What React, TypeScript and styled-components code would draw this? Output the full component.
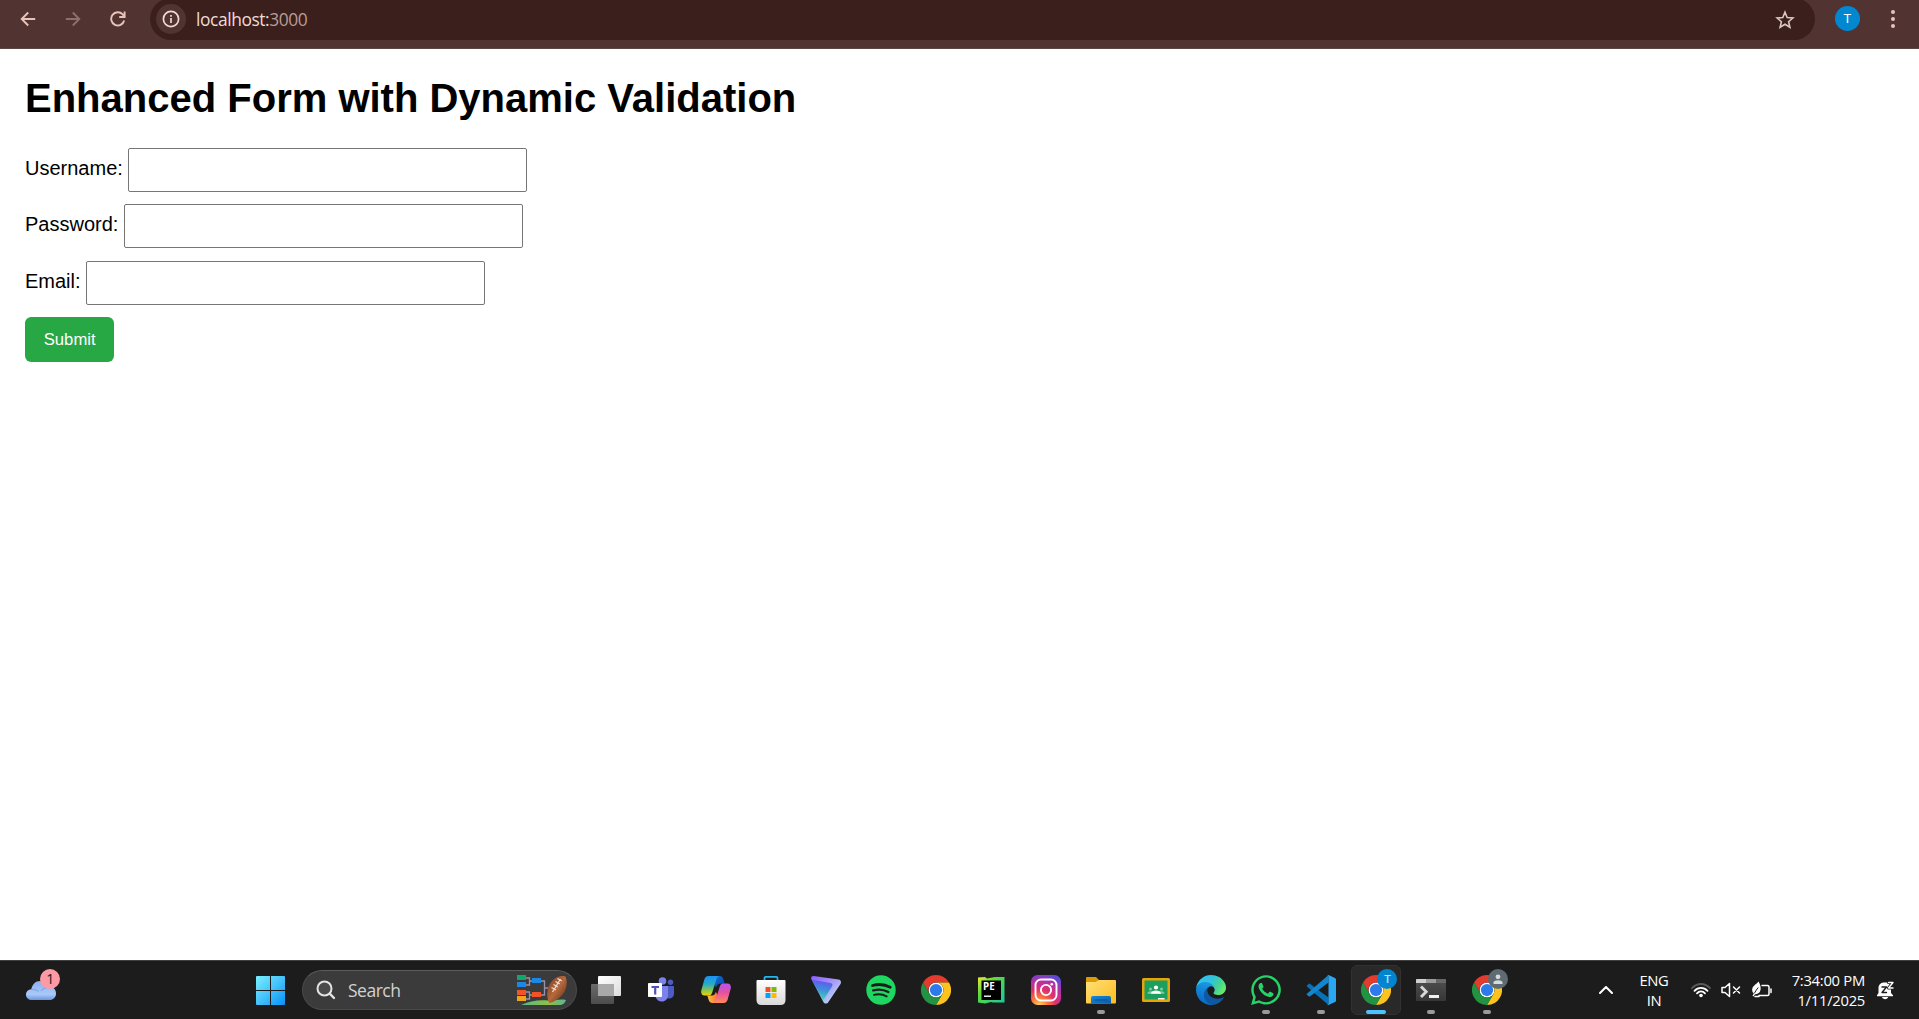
import React from "react";
import styled, { createGlobalStyle } from "styled-components";
import { FaWhatsapp } from "react-icons/fa";

const GlobalStyle = createGlobalStyle`
  html, body { margin: 0; padding: 0; background: #fff; overflow: hidden; }
  * { box-sizing: border-box; }
`;

const uiFont = `"Segoe UI", "Open Sans", "Noto Sans", sans-serif`;
const pageFont = `Arial, "Liberation Sans", sans-serif`;

const Screen = styled.div`
  display: flex;
  flex-direction: column;
  width: 1919px;
  height: 1019px;
  overflow: hidden;
`;

/* ---------- browser toolbar ---------- */

const Toolbar = styled.header`
  display: flex;
  flex: none;
  height: 49px;
  padding-left: 20px;
  background: #513431;
  border-bottom: 1px solid #5b4542;
  overflow: hidden;
  font-family: ${uiFont};
`;

const NavButtons = styled.nav`
  display: flex;
  width: 130px;
  height: 38px;
  align-items: center;
  gap: 29px;
`;

const NavIcon = styled.svg<{ $dim?: boolean }>`
  display: block;
  flex: none;
  width: 16px;
  height: 16px;
  fill: none;
  stroke: ${(p) => (p.$dim ? "#8f6f6b" : "#e9c2bb")};
  stroke-width: 1.9;
`;

const AddressBar = styled.div`
  display: flex;
  flex: none;
  align-items: center;
  width: 1665px;
  height: 42px;
  margin-top: -2px;
  padding: 0 20px 0 6px;
  border-radius: 21px;
  background: #3a1f1c;
`;

const SiteInfo = styled.span`
  display: flex;
  align-items: center;
  justify-content: center;
  width: 30px;
  height: 30px;
  border-radius: 50%;
  background: #513431;
`;

const Url = styled.span`
  flex: 1;
  margin-left: 10px;
  color: #b99c97;
  font-size: 17.4px;
  line-height: 24px;
  letter-spacing: -0.42px;
`;

const Host = styled.span`
  color: #f0dad5;
`;

const Profile = styled.span`
  display: flex;
  align-items: center;
  justify-content: center;
  width: 25px;
  height: 25px;
  margin: 6px 0 0 20px;
  border-radius: 50%;
  background: #0288d1;
  color: #fff;
  font: 13px Roboto, sans-serif;
`;

const MenuDots = styled.svg`
  width: 6px;
  height: 20px;
  margin: 9px 0 0 29.5px;
  fill: #e9c2bb;
`;

/* ---------- form page ---------- */

const Page = styled.main`
  display: flex;
  flex: 1;
  flex-direction: column;
  padding: 0 25px;
  background: #fff;
  color: #000;
  font-family: ${pageFont};
  font-size: 20px;
`;

const Title = styled.h1`
  margin: 26px 0 27px;
  font-size: 40px;
  line-height: 46px;
  font-weight: 700;
`;

const Form = styled.form`
  display: flex;
  flex-direction: column;
  align-items: flex-start;
  gap: 12.4px;
`;

const Field = styled.label`
  display: flex;
  gap: 5.6px;
  height: 44px;
  line-height: 23px;
`;

const FieldName = styled.span`
  padding-top: 9px;
`;

const TextInput = styled.input`
  appearance: none;
  width: 399px;
  height: 44px;
  margin: 0;
  padding: 10px;
  border: 1px solid #767676;
  border-radius: 2px;
  background: #fff;
  font: 16.67px ${pageFont};
  outline: none;
`;

const SubmitButton = styled.button`
  height: 45px;
  padding: 0 18.75px;
  border: 0;
  border-radius: 6.25px;
  background: #28a745;
  color: #fff;
  font: 16.67px ${pageFont};
`;

/* ---------- taskbar ---------- */

const Taskbar = styled.footer`
  display: flex;
  flex: none;
  align-items: center;
  height: 59px;
  border-top: 1px solid #404040;
  background: #1c1c1c;
  font-family: ${uiFont};
`;

const Widgets = styled.div`
  display: flex;
  width: 256px;
  height: 58px;
  padding: 5px 0 0 24px;
`;

const StartIcon = styled.svg`
  display: block;
  flex: none;
  width: 29px;
  height: 29px;
  margin-right: 17px;
`;

const SearchBox = styled.div`
  display: flex;
  flex: none;
  align-items: center;
  width: 275px;
  height: 40px;
  padding: 0 8px 0 13px;
  border: 1px solid #4a4a4a;
  border-top-color: #5c5c5c;
  border-radius: 20px;
  background: #3b3b3b;
  color: #d2d2d2;
  font-size: 17.5px;
`;

const SearchText = styled.span`
  flex: 1;
  margin: -1px 0 0 12px;
  letter-spacing: -0.5px;
`;

const Apps = styled.div`
  display: flex;
  flex: none;
  margin-left: 1px;
`;

const AppSlot = styled.div<{ $active?: boolean }>`
  position: relative;
  display: flex;
  align-items: center;
  justify-content: center;
  width: 50px;
  height: 50px;
  margin: 0 2.54px;
  border-radius: 6px;
  border: 1px solid ${(p) => (p.$active ? "#323232" : "transparent")};
  background: ${(p) => (p.$active ? "#292929" : "transparent")};
`;

const Indicator = styled.i<{ $active?: boolean }>`
  position: absolute;
  bottom: 0;
  width: ${(p) => (p.$active ? 20 : 8)}px;
  height: 4px;
  border-radius: 2px;
  background: ${(p) => (p.$active ? "#4cc2ff" : "#9a9a9a")};
`;

const AccountBadge = styled.span<{ $grey?: boolean }>`
  position: absolute;
  top: 3px;
  right: 3px;
  display: flex;
  align-items: center;
  justify-content: center;
  width: 20px;
  height: 20px;
  border-radius: 50%;
  background: ${(p) => (p.$grey ? "#5f6b73" : "#0285d0")};
  color: #b9def3;
  font: 500 11.5px Roboto, sans-serif;
`;

const Tray = styled.div`
  display: flex;
  flex: none;
  align-items: center;
  margin-left: auto;
  padding-right: 23px;
  color: #fff;
  font-size: 14.8px;
  line-height: 20px;
`;

const TrayIcon = styled.svg<{ $weight?: number }>`
  display: block;
  flex: none;
  fill: none;
  stroke: #fff;
  stroke-width: ${(p) => p.$weight ?? 1.5};
  stroke-linecap: round;
  stroke-linejoin: round;
`;

const Language = styled.div`
  width: 50px;
  margin: 0 12px 0 16px;
  text-align: center;
  letter-spacing: -0.4px;
`;

const Status = styled.div`
  display: flex;
  align-items: center;
  gap: 10px;
`;

const Clock = styled.div`
  width: 86px;
  margin: -1px 11px 0 7px;
  text-align: right;
  white-space: nowrap;
  letter-spacing: -0.28px;
`;

/* ---------- icons ---------- */

const Glyph = styled.svg`
  display: block;
  flex: none;
  width: 30px;
  height: 30px;
`;

const WhatsAppGlyph = styled(FaWhatsapp)`
  width: 34px;
  height: 34px;
  color: #25d366;
`;

const Chrome = () => (
  <Glyph viewBox="0 0 48 48">
    <circle cx="24" cy="24" r="12" fill="#fff" />
    <path fill="#e33b2e" d="M24,12H44.7812a23.9939,23.9939,0,0,0-41.5639.0029L13.6079,30l.0093-.0024A11.9852,11.9852,0,0,1,24,12Z" />
    <path fill="#fcc31e" d="M34.3913,30.0029,24.0007,48A23.994,23.994,0,0,0,44.78,12.0031H23.9989l-.0025.0093A11.985,11.985,0,0,1,34.3913,30.0029Z" />
    <path fill="#229342" d="M13.6086,30.0031,3.218,12.006A23.994,23.994,0,0,0,24.0025,48L34.3931,30.0029l-.0067-.0068a11.9852,11.9852,0,0,1-20.7778.007Z" />
    <circle cx="24" cy="24" r="9.8" fill="#2b7bea" />
  </Glyph>
);

const Weather = () => (
  <svg width="38" height="40" viewBox="0 0 38 40">
    <defs>
      <linearGradient id="cloud" x1="0" y1="0" x2="0" y2="1">
        <stop offset="0" stopColor="#8cb1f3" />
        <stop offset=".7" stopColor="#a9c9f8" />
        <stop offset="1" stopColor="#6c95e2" />
      </linearGradient>
    </defs>
    <path fill="url(#cloud)" d="M8 34C4.5 34 2 31.8 2 28.7s2.3-5.200 5.300-5.400C8.300 18.500 11.600 15 16 15c4.200 0 7.300 2.500 8.500 6.200C29 20.500 32 23.400 32 27.500S29.200 34 25.500 34Z" />
    <path fill="none" stroke="#789fe6" strokeWidth="1.2" opacity=".7" d="M7.500 23.500c3-.6 5.200.1 7 2M17 25c1.500-2.300 4-3.600 7.400-3.700" />
    <circle cx="26" cy="13" r="10" fill="#ff99a4" />
    <text x="26.3" y="18" textAnchor="middle" fontSize="14" fontFamily="Open Sans, sans-serif" fill="#20191a">1</text>
  </svg>
);

const WindowsLogo = () => (
  <StartIcon viewBox="0 0 29 29">
    <defs>
      <linearGradient id="win" x1="0" y1="0" x2="29" y2="29" gradientUnits="userSpaceOnUse">
        <stop offset="0" stopColor="#78f0ff" />
        <stop offset=".5" stopColor="#45c3fa" />
        <stop offset="1" stopColor="#0790fb" />
      </linearGradient>
    </defs>
    <path fill="url(#win)" d="M1 0H14V14H0V1Q0 0 1 0ZM15 0H28Q29 0 29 1V14H15ZM0 15H14V29H1Q0 29 0 28ZM15 15H29V28Q29 29 28 29H15Z" />
  </StartIcon>
);

const Magnifier = () => (
  <svg width="20" height="20" viewBox="0 0 20 20" fill="#4b4b4b" stroke="#e4e4e4" strokeWidth="2" strokeLinecap="round">
    <circle cx="8.5" cy="8.5" r="7" />
    <path d="M13.7 13.7L18 18" strokeWidth="2.4" />
  </svg>
);

const SearchHighlight = () => (
  <svg width="51" height="32" viewBox="0 0 51 32">
    <defs>
      <linearGradient id="ball" x1="0" y1="0" x2="1" y2="1">
        <stop offset="0" stopColor="#7a3d22" />
        <stop offset=".5" stopColor="#b5683c" />
        <stop offset="1" stopColor="#5b2915" />
      </linearGradient>
      <linearGradient id="grass">
        <stop offset="0" stopColor="#55b88e" />
        <stop offset=".6" stopColor="#8fc045" />
        <stop offset="1" stopColor="#57b894" />
      </linearGradient>
    </defs>
    <path fill="none" stroke="#9a90a8" strokeWidth="1.3" d="M9 4h3.5v7H9M12.5 7h3M9 18h3.5v7H9M12.5 21h3M24 7h3.5v14H24M27.5 14h4" />
    <path fill="#12a56c" d="M0 1h9v5H0z" />
    <path fill="#1c87e5" d="M0 8h9v5H0zM15 4h9v5h-9z" />
    <path fill="#f4532a" d="M0 16h9v5H0zM15 18h9v5h-9z" />
    <path fill="#f3a31b" d="M0 22h9v5H0z" />
    <path fill="url(#grass)" d="M4 31c8-4 18-5.5 27-4.5 6 .2 12-2 18-.5-1 3-3 5-7 5Z" />
    <path fill="url(#ball)" d="M32.5 29C28 22 30 9 38.5 4 42 2 46 1.5 48.5 2.5c2.5 6 1 14-3.5 18.8C41.5 25.5 36.5 28 32.5 29Z" />
    <path fill="none" stroke="#ead9d0" strokeWidth="1.4" d="M35.5 18L43.5 5M34.5 13.5l4.5 2.5M36.5 10.5l4.3 2.5M38.5 7.5l4.3 2.5M40.5 4.5l4.3 2.5" />
  </svg>
);

const TaskView = () => (
  <Glyph viewBox="0 0 30 30">
    <defs>
      <linearGradient id="tvBack" x1="0" y1="0" x2="0" y2="1">
        <stop offset="0" stopColor="#6c6c6c" />
        <stop offset="1" stopColor="#4c4c4c" />
      </linearGradient>
      <linearGradient id="tvFront" x1="0" y1="0" x2="1" y2="1">
        <stop offset="0" stopColor="#fff" />
        <stop offset="1" stopColor="#dcdcdc" />
      </linearGradient>
    </defs>
    <rect x="7" y="1" width="23" height="20" rx="1" fill="url(#tvFront)" />
    <rect x="0" y="9" width="23" height="20" rx="1" fill="url(#tvBack)" />
    <path fill="#a9a9a9" d="M7 9H23V21H7Z" />
  </Glyph>
);

const Teams = () => (
  <Glyph viewBox="2 0 30 30">
    <circle cx="26.5" cy="7.2" r="2.7" fill="#4f5bc5" />
    <path fill="#4f5bc5" d="M20 11h9.5q.5 0 .5.5V18.5c0 3-2.3 5-5 5s-5-2-5-5Z" />
    <circle cx="18.5" cy="6" r="3.8" fill="#7b83eb" />
    <path fill="#7b83eb" d="M11 11h13v9c0 4-2.8 6.5-6 6.5s-5.8-2-6.6-5Z" />
    <rect x="4" y="8" width="14" height="14" rx=".8" fill="#fff" />
    <path fill="#4b53bc" d="M7.5 11h7.500v1.900h-2.700V19.500h-2.200v-6.600H7.500Z" />
  </Glyph>
);

const Copilot = () => (
  <Glyph viewBox="0 0 30 30">
    <defs>
      <linearGradient id="cpL" x1="0" y1="0" x2="0" y2="1">
        <stop offset="0" stopColor="#1d92ee" />
        <stop offset=".4" stopColor="#23aacb" />
        <stop offset=".7" stopColor="#7cc457" />
        <stop offset="1" stopColor="#f3d300" />
      </linearGradient>
      <linearGradient id="cpR" x1="0" y1="0" x2="0" y2="1">
        <stop offset="0" stopColor="#b557ed" />
        <stop offset=".45" stopColor="#e34fa6" />
        <stop offset="1" stopColor="#ff8a55" />
      </linearGradient>
      <linearGradient id="cpT" x1="0" y1="0" x2="1" y2="1">
        <stop offset="0" stopColor="#1372df" />
        <stop offset="1" stopColor="#0947a5" />
      </linearGradient>
      <linearGradient id="cpB">
        <stop offset="0" stopColor="#ffc33c" />
        <stop offset="1" stopColor="#f3553e" />
      </linearGradient>
    </defs>
    <path fill="url(#cpT)" d="M10 1H18.500c2 0 3.200 1.200 3.800 3l1.400 4.700H19c-2.200 0-3.200 1.500-3.900 3.700Z" />
    <path fill="url(#cpB)" d="M20 28H11.500c-2 0-3.200-1.200-3.800-3l-1.400-4.600H11c2.200 0 3.200-1.500 3.900-3.700Z" />
    <path fill="url(#cpL)" d="M7.500 1H19c-2 0-3 1.600-3.600 3.600L11.200 17.500c-.6 2-1.600 3.100-3.800 3.100H3.500C.7 20.600-.4 18 .4 15L3.200 5C3.900 2.500 5.200 1 7.500 1Z" />
    <path fill="url(#cpR)" d="M22.500 28H11c2 0 3-1.600 3.600-3.600L18.800 11.500c.6-2 1.600-3.100 3.800-3.100h3.900c2.800 0 3.900 2.600 3.100 5.600L26.800 24c-.7 2.500-2 4-4.300 4Z" />
  </Glyph>
);

const Store = () => (
  <Glyph viewBox="0 0 30 30">
    <defs>
      <linearGradient id="bag" x1="0" y1="0" x2="0" y2="1">
        <stop offset="0" stopColor="#fff" />
        <stop offset="1" stopColor="#d9d9d9" />
      </linearGradient>
    </defs>
    <path fill="none" stroke="#28b4ec" strokeWidth="1.8" d="M8.500 7V3q0-1.100 1.100-1.100H20.400q1.100 0 1.100 1.100V7" />
    <path fill="url(#bag)" d="M.5 6q0-1 1-1h27q1 0 1 1V25q0 5-5 5H5.500q-5 0-5-5Z" />
    <path fill="#f25022" d="M9.500 12h5v5h-5z" />
    <path fill="#7fba00" d="M15.500 12h5v5h-5z" />
    <path fill="#00a4ef" d="M9.500 18h5v5h-5z" />
    <path fill="#ffb900" d="M15.500 18h5v5h-5z" />
  </Glyph>
);

const ProtonVpn = () => (
  <Glyph viewBox="0 0 30 30">
    <defs>
      <linearGradient id="pvA" x1="0" y1="0" x2="1" y2="1">
        <stop offset="0" stopColor="#8a5cff" />
        <stop offset=".45" stopColor="#a795fb" />
        <stop offset="1" stopColor="#bff5ea" />
      </linearGradient>
      <linearGradient id="pvB" x1=".6" y1="0" x2=".4" y2="1">
        <stop offset="0" stopColor="#6650f5" />
        <stop offset=".5" stopColor="#3d93d6" />
        <stop offset="1" stopColor="#3fe0b5" />
      </linearGradient>
    </defs>
    <path fill="url(#pvA)" d="M2.800 1L27.500 4.600c2.200.4 3.200 2.400 2 4.300L17.400 27c-1.300 2-3.900 2-5 0L.3 4C-.5 2.300.9.800 2.800 1Z" />
    <path fill="url(#pvB)" d="M.8 4.800L19.500 8c1.900.3 2.600 1.800 1.500 3.400L12 25.500Z" />
  </Glyph>
);

const Spotify = () => (
  <Glyph viewBox="0 0 30 30">
    <circle cx="15" cy="15" r="14.7" fill="#1ed760" />
    <g fill="none" stroke="#1c1c1c" strokeLinecap="round">
      <path strokeWidth="2.8" d="M6.500 10.500c6-1.700 12.500-1.100 17.800 1.700" />
      <path strokeWidth="2.3" d="M7.200 15.400c5.200-1.500 10.700-.9 15.200 1.600" />
      <path strokeWidth="1.9" d="M7.900 19.900c4.500-1.200 8.900-.7 12.800 1.500" />
    </g>
  </Glyph>
);

const PyCharmEdu = () => (
  <Glyph viewBox="0 0 30 30">
    <defs>
      <linearGradient id="pe" x1="0" y1="0" x2="1" y2="1">
        <stop offset="0" stopColor="#f0ea3c" />
        <stop offset=".35" stopColor="#5fd83f" />
        <stop offset="1" stopColor="#14c9a0" />
      </linearGradient>
    </defs>
    <path fill="url(#pe)" d="M2 2.500L9 2l2 1.500L19 2h9.500v25.500H17L15 27 9 28.500 2 27.500Z" />
    <path fill="#000" d="M5.500 5.500h19.500v19.500H5.500z" />
    <text x="7" y="15.3" fontSize="9.8" fontWeight="700" fontFamily="Open Sans, sans-serif" fill="#fff">PE</text>
    <path fill="#fff" d="M8 20.500h7v1.400H8z" />
  </Glyph>
);

const Instagram = () => (
  <Glyph viewBox="0 0 30 30">
    <defs>
      <radialGradient id="ig" cx=".28" cy="1.02" r="1.08">
        <stop offset="0" stopColor="#ffd45c" />
        <stop offset=".25" stopColor="#fd7a35" />
        <stop offset=".5" stopColor="#e0306d" />
        <stop offset=".78" stopColor="#b52fa8" />
        <stop offset="1" stopColor="#5a4bd8" />
      </radialGradient>
    </defs>
    <rect width="30" height="30" rx="6.5" fill="url(#ig)" />
    <g fill="none" stroke="#fff" strokeWidth="1.9">
      <rect x="4.5" y="4.5" width="21" height="21" rx="5.5" />
      <circle cx="15" cy="15" r="5.1" />
    </g>
    <circle cx="20.8" cy="9.2" r="1.3" fill="#fff" />
  </Glyph>
);

const Explorer = () => (
  <Glyph viewBox="0 0 30 30">
    <defs>
      <linearGradient id="fold" x1="0" y1="0" x2="1" y2="1">
        <stop offset="0" stopColor="#ffe07a" />
        <stop offset="1" stopColor="#fdbb1c" />
      </linearGradient>
      <linearGradient id="tray" x1="0" y1="0" x2="1" y2="1">
        <stop offset="0" stopColor="#1688dc" />
        <stop offset="1" stopColor="#065da8" />
      </linearGradient>
    </defs>
    <path fill="#dd9a07" d="M0 3q0-1 1-1h9l3.500 3.500V9H0Z" />
    <path fill="url(#fold)" d="M0 7h9.500L13 5H29q1 0 1 1V27.500q0 1-1 1H1q-1 0-1-1Z" />
    <path fill="url(#tray)" d="M5 28.500V23q0-2 2-2H23q2 0 2 2v5.500Z" />
    <path fill="#0a4c86" d="M8.500 24.500h13v1h-13z" />
  </Glyph>
);

const Classroom = () => (
  <Glyph viewBox="0 0 30 30">
    <rect x="1" y="3" width="28" height="24" rx="1.5" fill="#e3a60b" />
    <path fill="#1c9f5d" d="M3.500 5.500h23v19h-23z" />
    <g fill="#7fcaa4">
      <circle cx="9.5" cy="14" r="1.5" />
      <circle cx="20.5" cy="14" r="1.5" />
      <path d="M6.500 18.800c0-1.800 1.500-2.500 3-2.500h11c1.500 0 3 .7 3 2.500Z" />
    </g>
    <circle cx="15" cy="12.5" r="2.1" fill="#fff" />
    <path fill="#fff" d="M10 18.800c0-2.200 2.500-3.300 5-3.300s5 1.100 5 3.300ZM17 23h6.500v1.500H17Z" />
  </Glyph>
);

const Edge = () => (
  <Glyph viewBox="0 0 256 256">
    <defs>
      <linearGradient id="eg1" x1="0" y1="0" x2="1" y2="0">
        <stop offset="0" stopColor="#0c59a4" />
        <stop offset="1" stopColor="#1256a0" />
      </linearGradient>
      <linearGradient id="eg2" x1=".6" y1="0" x2=".4" y2="1">
        <stop offset="0" stopColor="#1b9de2" />
        <stop offset=".5" stopColor="#127fd6" />
        <stop offset="1" stopColor="#0667c9" />
      </linearGradient>
      <linearGradient id="eg3" x1="0" y1=".2" x2="1" y2=".6">
        <stop offset="0" stopColor="#35c1f1" />
        <stop offset=".45" stopColor="#2fc2df" />
        <stop offset=".75" stopColor="#45d195" />
        <stop offset="1" stopColor="#66eb6e" />
      </linearGradient>
    </defs>
    <g transform="translate(-4.63 -4.92)">
      <path fill="url(#eg1)" d="M235.68,195.46a93.73,93.73,0,0,1-10.54,4.71,101.87,101.87,0,0,1-35.9,6.46c-47.32,0-88.54-32.55-88.54-74.32A31.48,31.48,0,0,1,117.13,105c-42.8,1.8-53.8,46.4-53.8,72.53,0,73.88,68.09,81.37,82.76,81.37,7.91,0,19.84-2.3,27-4.56l1.31-.44A128.34,128.34,0,0,0,241,201.1a4,4,0,0,0-5.32-5.64Z" />
      <path fill="url(#eg2)" d="M110.34,246.34A79.2,79.2,0,0,1,87.6,225,80.72,80.72,0,0,1,117.13,105c3.12-1.47,8.45-4.13,15.54-4a32.35,32.35,0,0,1,25.69,13,31.88,31.88,0,0,1,6.36,18.66c0-.21,24.46-79.6-80-79.6-43.9,0-80,41.66-80,78.21a130.15,130.15,0,0,0,12.11,56,128,128,0,0,0,156.38,67.11,75.55,75.55,0,0,1-62.78-8Z" />
      <path fill="url(#eg3)" d="M156.94,153.78c-.81,1.05-3.3,2.5-3.3,5.66,0,2.61,1.7,5.12,4.72,7.23,14.38,10,41.49,8.68,41.56,8.68a59.56,59.56,0,0,0,30.27-8.35A61.38,61.38,0,0,0,260.62,114c.26-22.41-8-37.31-11.34-43.91C228.09,28.76,182.35,4.92,132.61,4.92a128,128,0,0,0-128,126.2c.48-36.54,36.8-66.05,80-66.05,3.5,0,23.46.34,42,10.07,16.34,8.58,24.9,18.94,30.85,29.21,6.18,10.67,7.28,24.15,7.28,29.52S160.61,147.19,156.94,153.78Z" />
    </g>
  </Glyph>
);

const VsCode = () => (
  <Glyph viewBox="0 0 30 30">
    <path fill="#0672ba" d="M1.200 10.200L2.600 8.900q.8-.6 1.600 0L22.500 22.500V30L.9 11.500q-.6-.7.300-1.300Z" />
    <path fill="#1287cf" d="M1.200 20L2.600 21.300q.8.600 1.600 0L22.500 7.500V0L.9 18.700q-.6.700.3 1.300Z" />
    <path fill="#2aa7f0" d="M22.500 0L29 3q1 .5 1 1.600V25.400q0 1.100-1 1.600L22.500 30q-1 .2-1.700-.6 1.700.8 1.700-1.200V1.800q0-2-1.700-1.200.7-.8 1.700-.6Z" />
  </Glyph>
);

const Terminal = () => (
  <Glyph viewBox="0 0 30 30">
    <defs>
      <linearGradient id="term" x1="0" y1="0" x2="0" y2="1">
        <stop offset="0" stopColor="#505050" />
        <stop offset="1" stopColor="#363636" />
      </linearGradient>
    </defs>
    <rect x="0" y="4" width="30" height="22" rx="1" fill="url(#term)" />
    <path fill="#d0d0d0" d="M1 4h9v4H0V5Q0 4 1 4Z" />
    <path fill="#9c9c9c" d="M10 4h10v4H10Z" />
    <path fill="#686868" d="M20 4h9q1 0 1 1v3H20Z" />
    <path fill="none" stroke="#d7d7d7" strokeWidth="2.9" d="M5 11.500l5.200 5.200L5 22" />
    <path fill="#efefef" d="M13 20h10v3H13z" />
  </Glyph>
);

const PersonGlyph = () => (
  <svg width="10" height="11" viewBox="0 0 10 11" fill="#d5dbdd">
    <circle cx="5" cy="2.8" r="2.4" />
    <path d="M.5 10V8.500C.5 6.900 3 6.200 5 6.200s4.500.7 4.500 2.300V10Z" />
  </svg>
);

/* ---------- layout ---------- */

type App = {
  name: string;
  icon: React.ReactNode;
  running?: boolean;
  active?: boolean;
  badge?: "T" | "guest";
};

const apps: App[] = [
  { name: "task-view", icon: <TaskView /> },
  { name: "teams", icon: <Teams /> },
  { name: "copilot", icon: <Copilot /> },
  { name: "store", icon: <Store /> },
  { name: "vpn", icon: <ProtonVpn /> },
  { name: "spotify", icon: <Spotify /> },
  { name: "chrome", icon: <Chrome /> },
  { name: "pycharm", icon: <PyCharmEdu /> },
  { name: "instagram", icon: <Instagram /> },
  { name: "explorer", icon: <Explorer />, running: true },
  { name: "classroom", icon: <Classroom /> },
  { name: "edge", icon: <Edge /> },
  { name: "whatsapp", icon: <WhatsAppGlyph />, running: true },
  { name: "vscode", icon: <VsCode />, running: true },
  { name: "chrome-t", icon: <Chrome />, running: true, active: true, badge: "T" },
  { name: "terminal", icon: <Terminal />, running: true },
  { name: "chrome-guest", icon: <Chrome />, running: true, badge: "guest" },
];

const fields = [
  { label: "Username:", type: "text" },
  { label: "Password:", type: "password" },
  { label: "Email:", type: "email" },
];

export default function AppRoot() {
  return (
    <Screen>
      <GlobalStyle />
      <Toolbar>
        <NavButtons>
          <NavIcon viewBox="0 0 16 16">
            <path d="M15.200 8H2M8.200 1.500L1.700 8l6.500 6.500" />
          </NavIcon>
          <NavIcon $dim viewBox="0 0 16 16">
            <path d="M.8 8H14M7.800 1.500L14.300 8l-6.500 6.500" />
          </NavIcon>
          <NavIcon viewBox="0 0 16 16">
            <path d="M14.200 9.500A6.600 6.600 0 1 1 12.700 3.400L14.300 5.300M14.600.5V6H9.200" />
          </NavIcon>
        </NavButtons>
        <AddressBar>
          <SiteInfo>
            <svg width="18" height="18" viewBox="0 0 18 18" fill="none" stroke="#f0dad5" strokeWidth="1.7">
              <circle cx="9" cy="9" r="7.6" />
              <path d="M9 8V13M9 4.900V6.700" />
            </svg>
          </SiteInfo>
          <Url>
            <Host>localhost:</Host>3000
          </Url>
          <svg width="20" height="19" viewBox="0 0 20 19" fill="none" stroke="#dcc6c1" strokeWidth="1.6">
            <path d="M10 2.200l2.200 5.300 5.700.5-4.300 3.700 1.300 5.600L10 14.300l-4.900 3 1.300-5.600L2.100 8l5.700-.5Z" />
          </svg>
        </AddressBar>
        <Profile>T</Profile>
        <MenuDots viewBox="0 0 6 20">
          <circle cx="3" cy="3" r="2" />
          <circle cx="3" cy="10" r="2" />
          <circle cx="3" cy="17" r="2" />
        </MenuDots>
      </Toolbar>

      <Page>
        <Title>Enhanced Form with Dynamic Validation</Title>
        <Form>
          {fields.map((f) => (
            <Field key={f.label}>
              <FieldName>{f.label}</FieldName>
              <TextInput type={f.type} />
            </Field>
          ))}
          <SubmitButton type="button">Submit</SubmitButton>
        </Form>
      </Page>

      <Taskbar>
        <Widgets>
          <Weather />
        </Widgets>
        <WindowsLogo />
        <SearchBox>
          <Magnifier />
          <SearchText>Search</SearchText>
          <SearchHighlight />
        </SearchBox>
        <Apps>
          {apps.map((a) => (
            <AppSlot key={a.name} $active={a.active}>
              {a.icon}
              {a.badge && (
                <AccountBadge $grey={a.badge === "guest"}>
                  {a.badge === "T" ? "T" : <PersonGlyph />}
                </AccountBadge>
              )}
              {a.running && <Indicator $active={a.active} />}
            </AppSlot>
          ))}
        </Apps>
        <Tray>
          <TrayIcon $weight={2} width="14" height="8" viewBox="0 0 14 8">
            <path d="M1 7l6-6 6 6" />
          </TrayIcon>
          <Language>
            ENG
            <br />
            IN
          </Language>
          <Status>
            <TrayIcon $weight={1.8} width="20" height="16" viewBox="0 0 20 16">
              <path stroke="#5a5a5a" d="M1 6.200c5-5.600 13-5.600 18 0" />
              <path d="M3.500 8.800c3.600-4 9.400-4 13 0M6 11.300c2.200-2.500 5.800-2.500 8 0" />
              <circle cx="10" cy="13.5" r="1.8" fill="#fff" stroke="none" />
            </TrayIcon>
            <TrayIcon width="20" height="16" viewBox="0 0 20 16">
              <path d="M1 5.500h3L8.500 1.500v13L4 10.500H1ZM12.500 5l6 6M18.500 5l-6 6" />
            </TrayIcon>
            <TrayIcon width="21" height="18" viewBox="0 0 21 18">
              <path d="M11 4.500h5.500q1.500 0 1.500 1.500v7q0 1.500-1.500 1.500H8M20 8v3.500" />
              <path fill="#fff" stroke="none" d="M7.500.5C9.500 4 10.500 7.500 9 10.500c-1 2-3 2.800-5 2.700L2.500 15.500l-1-.7 1.300-2.200C.3 10 .8 6.500 3.500 4.300 5 3 6.500 2 7.500.5Z" />
              <path stroke="#1c1c1c" strokeWidth="1" d="M3.500 12c1-2 2.300-3.700 3.500-5.200" />
              <path d="M4 15.500h4" />
            </TrayIcon>
          </Status>
          <Clock>
            7:34:00 PM
            <br />
            1/11/2025
          </Clock>
          <TrayIcon width="20" height="20" viewBox="0 0 20 20">
            <path fill="#fff" stroke="none" d="M2.500 13V8C2.500 4.500 5 2.500 8.500 2.500h5V9H15v4l2 2.200v1H1v-1ZM6 17h6.200c-.4 1.400-1.600 2.200-3.100 2.200S6.400 18.400 6 17Z" />
            <path stroke="#1c1c1c" strokeWidth="1.4" d="M6 7H10.500L6 12.500H10.500" />
            <path stroke="#1c1c1c" strokeWidth="3" d="M12.500 2.500h4.500L12.500 8h4.500" />
            <path strokeWidth="1.4" d="M12.500 2.500h4.500L12.500 8h4.500" />
          </TrayIcon>
        </Tray>
      </Taskbar>
    </Screen>
  );
}
